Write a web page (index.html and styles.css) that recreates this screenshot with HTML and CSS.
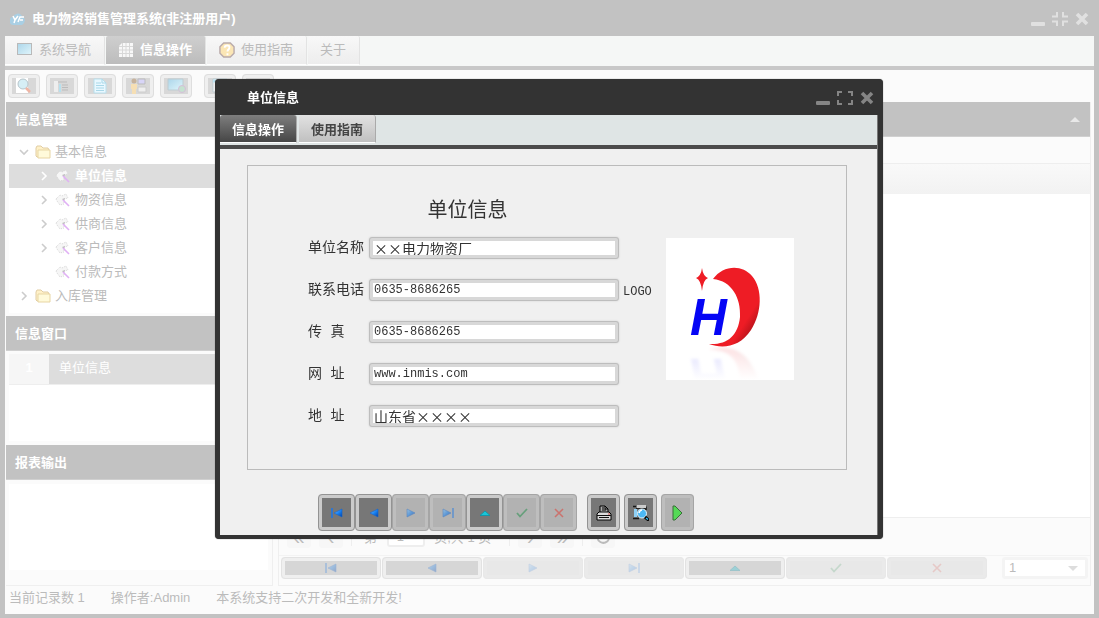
FILE: index.html
```html
<!DOCTYPE html>
<html lang="zh-CN">
<head>
<meta charset="utf-8">
<title>电力物资销售管理系统</title>
<link rel="stylesheet" href="styles.css">
</head>
<body>
<svg class="defs" aria-hidden="true">
  <defs>
    <linearGradient id="blue" x2="1" y2="1"><stop stop-color="#8fd0ff"/><stop offset=".5" stop-color="#1b86f5"/><stop offset="1" stop-color="#0040a8"/></linearGradient>
    <linearGradient id="red" x2="1" y2="1"><stop offset=".7" stop-color="#ee1c25"/><stop offset="1" stop-color="#70080c"/></linearGradient>
    <linearGradient id="sky" x2="1" y2="1"><stop stop-color="#acd6ea"/><stop offset="1" stop-color="#e0f5fb"/></linearGradient>
    <symbol id="first" viewBox="0 0 12 10"><path d="M1 0v10" stroke="#1976e8" stroke-width="1.5"/><path d="M11 1v8L3 5z" fill="url(#blue)" stroke="#1263cf" stroke-width=".6"/></symbol>
    <symbol id="prev" viewBox="0 0 12 10"><path d="M10 1v8L2 5z" fill="url(#blue)" stroke="#1263cf" stroke-width=".6"/></symbol>
    <symbol id="next" viewBox="0 0 12 10"><path d="M2 1v8l8-4z" fill="url(#blue)" stroke="#1263cf" stroke-width=".6"/></symbol>
    <symbol id="last" viewBox="0 0 12 10"><path d="M11 0v10" stroke="#1976e8" stroke-width="1.5"/><path d="M1 1v8l8-4z" fill="url(#blue)" stroke="#1263cf" stroke-width=".6"/></symbol>
    <symbol id="up" viewBox="0 0 12 10"><path d="M1 7.500h10L6 3z" fill="#19c5d8" stroke="#0795a9" stroke-width=".8"/></symbol>
    <symbol id="check" viewBox="0 0 12 10"><path d="M1 5l3 3.500L11 1" fill="none" stroke="#2b9150" stroke-width="1.8"/></symbol>
    <symbol id="cross" viewBox="0 0 12 10"><path d="M2 1l8 8M10 1L2 9" fill="none" stroke="#df4037" stroke-width="1.6"/></symbol>
    <symbol id="chev" viewBox="0 0 8 10"><path d="M2 1l4 4-4 4" fill="none" stroke="currentColor" stroke-width="1.6"/></symbol>
    <symbol id="folder" viewBox="0 0 16 14"><path d="M1 11V3l1-2h4l2 2h5l1 2v7H2z" fill="#fff1c8" stroke="#e1cda3"/><path d="M3 5h12v8H3z" fill="#fffada" stroke="#e7d5a3"/></symbol>
    <symbol id="wand" viewBox="0 0 16 14"><path d="M1 6l4-4 2 1 4-2 2 4-4 1v5L5 12 2 8z" fill="#f6f6f6" stroke="#d8d8d8" stroke-dasharray="1 1"/><path d="M7 6l3-1-1 3z" fill="#bbb"/><path d="M8 7l6 6" stroke="#e0b0f5" stroke-width="1.6"/></symbol>
    <symbol id="min" viewBox="0 0 14 14"><rect x="0" y="10" width="14" height="4" rx="1" fill="currentColor"/></symbol>
    <symbol id="close" viewBox="0 0 14 14"><path d="M2 2l10 10M12 2L2 12" stroke="currentColor" stroke-width="3.6"/></symbol>
  </defs>
</svg>
<main class="app">
  <header class="titlebar">
    <svg width="16" height="14" viewBox="0 0 16 14"><path d="M4 13a4 4 0 0 1-1-8 5 5 0 0 1 9-1 5 5 0 0 1 0 9z" fill="#a9cfe4"/><path d="M3 4l2 4 3-4M5 8l-1 3M8 10l2-5h4M10 8h3" fill="none" stroke="#fff" stroke-width="1.5"/></svg>
    <h1>电力物资销售管理系统(非注册用户)</h1>
    <div class="winctl">
      <button aria-label="最小化"><svg width="14" height="14"><use href="#min"/></svg></button>
      <button aria-label="还原"><svg width="16" height="14" viewBox="0 0 16 14"><path d="M0 4.500h5V0M11 0v4.500h5M0 9.500h5V14M11 14V9.500h5" fill="none" stroke="currentColor" stroke-width="2"/></svg></button>
      <button aria-label="关闭"><svg width="14" height="14"><use href="#close"/></svg></button>
    </div>
  </header>
  <nav class="tabs">
    <button class="tab"><svg width="16" height="14" viewBox="0 0 16 14"><rect x=".5" y=".5" width="14" height="11" fill="url(#sky)" stroke="#b9b9b9"/></svg>系统导航</button>
    <button class="tab on"><svg width="16" height="14" viewBox="0 0 16 14"><path d="M4 0h11v14H1V3z" fill="#f8f8f8"/><path d="M1 3.500h14M1 7h14M1 10.500h14M4.500 0v14M8 0v14M11.500 0v14" stroke="#d8d8d8"/></svg>信息操作</button>
    <button class="tab"><svg width="16" height="16" viewBox="0 0 17 17"><path d="M5 1h7l4 4v7l-4 4H5l-4-4V5z" fill="#fbe6b5" stroke="#b9aaaa" stroke-width="1.5"/><path d="M6 6c0-3 6-3 5 0 0 2-2 2-2 4M9 12v2" fill="none" stroke="#fff" stroke-width="2"/></svg>使用指南</button>
    <button class="tab">关于</button>
  </nav>
  <div class="toolbar">
    <button class="tool" aria-label="查询"><svg viewBox="0 0 24 16"><path d="M4 0h12v15H4z" fill="#fff"/><circle cx="11" cy="6" r="5" fill="#d6eef5" stroke="#b6c4ca"/><path d="M14 10l4 4" stroke="#efb5a4" stroke-width="2.5"/></svg></button>
    <button class="tool" aria-label="列表"><svg viewBox="0 0 24 16"><path d="M4 3h4v11H4z" fill="#eee"/><path d="M8 4h9M12 7h6M12 9.500h6M12 12h6" stroke="#bbb"/><path d="M10 6v8" stroke="#b6e0ee" stroke-width="2"/></svg></button>
    <button class="tool" aria-label="文档"><svg viewBox="0 0 24 16"><path d="M6 1h8l4 4v10H6z" fill="#e9f8ff" stroke="#b9dfec"/><path d="M8 5h5M8 7.500h8M8 10h8M8 12.500h8M14 1v4h4" fill="none" stroke="#a9d8e9"/></svg></button>
    <button class="tool" aria-label="用户"><svg viewBox="0 0 24 16"><path d="M5 6h6v5h-1v5H6v-5H5z" fill="#f6dfb4"/><circle cx="8" cy="3" r="2.5" fill="#c7b39d"/><path d="M12 1h7v5h-7z" fill="#d8d5f7" stroke="#bbb"/><path d="M12 9h8v5h-8z" fill="#efefef" stroke="#ccc"/></svg></button>
    <button class="tool" aria-label="桌面"><svg viewBox="0 0 24 16"><path d="M4 1h15v11H4z" fill="url(#sky)" stroke="#bdccd2"/><circle cx="18" cy="11" r="3.5" fill="#c5e2d0" stroke="#d6bed9"/></svg></button>
    <button class="tool split" aria-label="窗口"><svg viewBox="0 0 24 16"><path d="M5 1h14v13H5z" fill="#fff" stroke="#bdccd2"/><path d="M5 3h14" stroke="#bde5f4" stroke-width="3"/></svg></button>
    <button class="tool" aria-label="设置"><svg viewBox="0 0 24 16"><path d="M4 2h5v4H4zM13 2h6v4h-6z" fill="#ccc"/></svg></button>
  </div>
  <div class="body">
    <aside class="side">
      <h2 class="head">信息管理</h2>
      <ul class="tree">
        <li><svg class="turn" width="8" height="10"><use href="#chev"/></svg><svg width="16" height="14"><use href="#folder"/></svg>基本信息</li>
        <li class="sub on"><svg width="8" height="10"><use href="#chev"/></svg><svg width="16" height="14"><use href="#wand"/></svg>单位信息</li>
        <li class="sub"><svg width="8" height="10"><use href="#chev"/></svg><svg width="16" height="14"><use href="#wand"/></svg>物资信息</li>
        <li class="sub"><svg width="8" height="10"><use href="#chev"/></svg><svg width="16" height="14"><use href="#wand"/></svg>供商信息</li>
        <li class="sub"><svg width="8" height="10"><use href="#chev"/></svg><svg width="16" height="14"><use href="#wand"/></svg>客户信息</li>
        <li class="sub leaf"><svg width="16" height="14"><use href="#wand"/></svg>付款方式</li>
        <li><svg width="8" height="10"><use href="#chev"/></svg><svg width="16" height="14"><use href="#folder"/></svg>入库管理</li>
      </ul>
      <h2 class="head">信息窗口</h2>
      <div class="list"><div class="row"><b>1</b><span>单位信息</span></div></div>
      <h2 class="head">报表输出</h2>
      <div class="blank"></div>
    </aside>
    <section class="content">
      <div class="head bar"><svg width="10" height="5" viewBox="0 0 10 5"><path d="M0 5h10L5 0z" fill="#e8e8e8"/></svg></div>
      <div class="strip"></div>
      <div class="cols"></div>
      <div class="grid"></div>
      <div class="pager">
        <button>«</button><button>‹</button><i></i>
        <label class="page">第 <input value="1" aria-label="页"> 页,共 1 页</label><i></i>
        <button>›</button><button>»</button><i></i>
        <button aria-label="刷新"><svg width="16" height="16" viewBox="0 0 16 16"><path d="M13 4a6 6 0 1 0 1 6M14 1v5H9" fill="none" stroke="#bbb" stroke-width="2"/></svg></button>
      </div>
      <div class="recnav">
        <button aria-label="首条"><svg width="12" height="10"><use href="#first"/></svg></button>
        <button aria-label="上一条"><svg width="12" height="10"><use href="#prev"/></svg></button>
        <button disabled aria-label="下一条"><svg width="12" height="10"><use href="#next"/></svg></button>
        <button disabled aria-label="末条"><svg width="12" height="10"><use href="#last"/></svg></button>
        <button aria-label="编辑"><svg width="12" height="10"><use href="#up"/></svg></button>
        <button disabled aria-label="保存"><svg width="12" height="10"><use href="#check"/></svg></button>
        <button disabled aria-label="取消"><svg width="12" height="10"><use href="#cross"/></svg></button>
        <div class="combo"><select aria-label="记录"><option>1</option></select><svg width="10" height="5" viewBox="0 0 10 5"><path d="M0 0h10L5 5z" fill="#ddd"/></svg></div>
      </div>
    </section>
  </div>
  <footer class="status"><span>当前记录数 1</span><span>操作者:Admin</span><span>本系统支持二次开发和全新开发!</span></footer>
</main>

<div class="overlay">
  <section class="dialog" role="dialog" aria-labelledby="dlg">
    <header class="dtitle">
      <h2 id="dlg">单位信息</h2>
      <div class="winctl">
        <button aria-label="最小化"><svg width="14" height="14"><use href="#min"/></svg></button>
        <button aria-label="最大化"><svg width="16" height="14" viewBox="0 0 16 14"><path d="M1 5V1h4M11 1h4v4M1 9v4h4M11 13h4V9" fill="none" stroke="currentColor" stroke-width="2"/></svg></button>
        <button aria-label="关闭"><svg width="14" height="14"><use href="#close"/></svg></button>
      </div>
    </header>
    <div class="dinner">
      <nav class="dtabs"><button class="on">信息操作</button><button>使用指南</button></nav>
      <form class="panel">
        <div class="fields">
          <h3>单位信息</h3>
          <div class="field"><label for="name">单位名称</label><input id="name" class="cn" value="××电力物资厂"></div>
          <div class="field"><label for="tel">联系电话</label><input id="tel" value="0635-8686265"></div>
          <div class="field"><label for="fax">传 真</label><input id="fax" value="0635-8686265"></div>
          <div class="field"><label for="web">网 址</label><input id="web" value="www.inmis.com"></div>
          <div class="field"><label for="addr">地 址</label><input id="addr" class="cn" value="山东省××××"></div>
        </div>
        <span class="logolabel">LOGO</span>
        <svg class="logo" width="128" height="142" viewBox="0 0 128 142" role="img" aria-label="LOGO">
          <defs><linearGradient id="fade" x1="0" y1="0" x2="0" y2="1"><stop offset="0" stop-color="#fff" stop-opacity=".86"/><stop offset="1" stop-color="#fff"/></linearGradient>
          <filter id="soft"><feGaussianBlur stdDeviation="1.5"/></filter>
          <g id="mark"><path d="M47 41C57 27 76 26 86 38 97 51 96 75 85 92 74 109 57 111 43 106 61 107 72 98 74 79 75 60 66 43 47 41z" fill="url(#red)"/><path d="M36 30q1 8 6 10-5 2-6 13-1-11-6-13 5-2 6-10z" fill="#ee1c25"/><text x="24" y="97" class="mark">H</text></g></defs>
          <rect width="128" height="142" fill="#fff"/>
          <use href="#mark" transform="matrix(1 0 0 -1 0 218)" filter="url(#soft)"/>
          <path d="M0 106h128v36H0z" fill="url(#fade)"/>
          <use href="#mark"/>
        </svg>
      </form>
      <div class="actions">
        <button class="live" aria-label="首条"><svg width="12" height="10"><use href="#first"/></svg></button>
        <button class="live" aria-label="上一条"><svg width="12" height="10"><use href="#prev"/></svg></button>
        <button disabled aria-label="下一条"><svg width="12" height="10"><use href="#next"/></svg></button>
        <button disabled aria-label="末条"><svg width="12" height="10"><use href="#last"/></svg></button>
        <button class="live" aria-label="编辑"><svg width="12" height="10"><use href="#up"/></svg></button>
        <button disabled aria-label="保存"><svg width="12" height="10"><use href="#check"/></svg></button>
        <button disabled aria-label="取消"><svg width="12" height="10"><use href="#cross"/></svg></button>
        <div class="extra">
          <button class="live" aria-label="打印"><svg width="16" height="16" viewBox="0 0 16 16"><path d="M4 8V1h5l3 3v4" fill="#aaa" stroke="#000"/><path d="M6 3h2M6 5h4M9 1v3h3" stroke="#000" fill="none"/><path d="M1 9l2-2h10l2 2v6H1z" fill="#ddd" stroke="#000"/><path d="M1 10.500h14M3 12.500h10" stroke="#111"/><path d="M12 9h2" stroke="#d44"/></svg></button>
          <button class="live" aria-label="预览"><svg width="16" height="16" viewBox="0 0 16 16"><path d="M0 1.500h3M13 1.500V5M0 13.500h6" fill="none" stroke="#161616" stroke-width="1.5"/><path d="M4 0h9v3H4z" fill="#ccc"/><path d="M3 3.500h10" stroke="#222"/><path d="M1 4h3v8H1z" fill="#8fd0f5"/><circle cx="9" cy="8.500" r="4.500" fill="#4bb8f5" stroke="#e4f7ff"/><path d="M6 8q1-3 3-3" stroke="#fff" stroke-width="1.5" fill="none"/><path d="M12 12l4 3.500" stroke="#000" stroke-width="3"/><path d="M13 13l2 1.500" stroke="#32bdf5" stroke-width="1.5"/></svg></button>
          <button class="exit" aria-label="执行"><svg width="12" height="16" viewBox="0 0 12 16"><path d="M1 1v14h2l7-7-7-7z" fill="#55d957" stroke="#3b6c3b"/></svg></button>
        </div>
      </div>
    </div>
  </section>
</div>
</body>
</html>
```
FILE: styles.css
```css
* { box-sizing: border-box; }
body { margin: 0; height: 100vh; overflow: hidden; font: 13px/18px "Liberation Sans", "Noto Sans CJK SC", sans-serif; color: #bbb; }
button, input, select { font: inherit; color: inherit; margin: 0; }
button { cursor: pointer; padding: 0; border: 0; background: none; }
button svg { display: block; }
h1, h2, h3, ul { margin: 0; padding: 0; font-size: 13px; }
.defs { position: absolute; width: 0; height: 0; }

.app { height: 100vh; display: flex; flex-direction: column; background: #fbfbfb; border: solid #c2c2c2; border-width: 0 5px 4px; }
.titlebar { display: flex; align-items: center; gap: 6px; height: 36px; flex: none; padding: 2px 5px 0; background: #c2c2c2; color: #fff; }
.winctl { margin-left: auto; display: flex; gap: 7px; color: #e0e0e0; }

.tabs { display: flex; gap: 1px; height: 34px; flex: none; background: #f5f7f6; border-bottom: 4px solid #c8c8c8; padding-bottom: 1px; }
.tab { display: flex; align-items: center; gap: 6px; padding: 0 13px 0 12px; background: linear-gradient(#f8f8f8, #ededed); border-right: 1px solid #e3e3e3; border-bottom: 1px solid #fff; border-radius: 2px 2px 0 0; }
.tab.on { background: linear-gradient(#cfcfcf, #bcbcbc); color: #fff; font-weight: bold; }

.toolbar { display: flex; gap: 6px; height: 32px; flex: none; padding: 4px 3px; }
.tool { width: 32px; height: 24px; padding: 0; background: #d8d8d8; border: 4px solid #efefef; outline: 1px solid #dedede; outline-offset: -1px; border-radius: 4px; display: grid; place-items: center; }
.tool.split { margin-left: 6px; }
.tool svg { width: 24px; height: 16px; }

.body { flex: 1; min-height: 0; display: flex; gap: 5px; padding: 0 3px 0 1px; }
.side { flex: none; width: 267px; display: flex; flex-direction: column; border-right: 1px solid #efefef; border-bottom: 1px solid #efefef; }
.head { height: 35px; flex: none; padding: 9px 9px; background: #c2c2c2; color: #fff; border-bottom: 1px solid #d0d0d0; }
.tree { list-style: none; margin: 3px 3px; padding-bottom: 5px; background: #fff; }
.tree li { display: flex; align-items: center; gap: 4px; height: 24px; padding-left: 11px; color: #bbb; }
.tree li svg { color: #ccc; }
.tree li svg + svg { margin-left: 3px; }
.tree .sub { padding-left: 31px; }
.tree .leaf { padding-left: 46px; }
.tree .on { background: #ddd; color: #fff; font-weight: bold; }
.tree .on svg { color: #fff; }
.turn { transform: rotate(90deg); }
.list { height: 87px; flex: none; margin: 3px 3px 4px; background: #fff; }
.row { height: 31px; display: flex; background: #ddd; color: #fff; line-height: 28px; border-bottom: 1px solid #eee; }
.row b { width: 40px; text-align: center; background: #f6f6f6; }
.row span { padding-left: 10px; }
.blank { flex: 1; margin: 4px 4px 15px 3px; background: #fff; }

.content { flex: 1; min-width: 0; display: flex; flex-direction: column; border: solid #efefef; border-width: 0 1px 1px; }
.bar { display: flex; justify-content: flex-end; align-items: center; padding: 0 10px; }
.strip { height: 27px; flex: none; border-bottom: 1px solid #eee; }
.cols { height: 30px; flex: none; background: linear-gradient(#f9f9f9, #f2f2f2); }
.grid { flex: 1; background: #fff; border-bottom: 1px solid #eee; }
.pager { height: 38px; flex: none; display: flex; align-items: center; gap: 8px; padding: 4px 8px; border-bottom: 1px solid #f3f3f3; }
.pager button { width: 24px; height: 22px; background: #f7f7f7; border-radius: 3px; font-size: 20px; display: grid; place-items: center; }
.pager i { width: 1px; height: 18px; background: #eee; }
.page { padding: 0 4px; margin-right: 6px; }
.page input { width: 38px; height: 20px; margin: 0 6px; padding: 0 8px; background: #fff; border: 2px solid #eee; border-radius: 3px; }
.recnav { height: 29px; flex: none; display: flex; gap: 1px; padding: 1px 2px 6px 2px; }
.recnav button { flex: 1; display: grid; place-items: center; background: #d6d6d6; border: 4px solid #efefef; outline: 1px solid #e2e2e2; outline-offset: -1px; border-radius: 4px; }
.recnav button:disabled { background: #e8e8e8; border-color: #eaeaea; outline-color: #e8e8e8; }
.recnav button svg { opacity: .3; }
.recnav button:disabled svg { opacity: .18; }
.combo { width: 86px; margin-left: 14px; display: flex; align-items: center; background: #fff; border: 3px solid #f4f4f4; border-radius: 3px; padding-right: 7px; }
.combo select { flex: 1; min-width: 0; appearance: none; border: 0; background: none; padding: 0 4px; }
.status { height: 28px; flex: none; display: flex; gap: 26px; padding: 3px 4px; }

.overlay { position: fixed; inset: 0; display: flex; justify-content: center; align-items: flex-start; padding: 79px 17px 16px 16px; }
.dialog { width: 668px; background: #333; border-radius: 4px; padding: 0 5px 4px; box-shadow: 0 0 1px #555; }
.dtitle { display: flex; align-items: center; height: 36px; padding: 2px 4px 0 27px; color: #fff; }
.dtitle .winctl { color: #858585; }
.dinner { background: #f0f0f0; border-right: 1px solid #777; }
.dtabs { display: flex; gap: 2px; height: 34px; background: #dfe5e5; border-bottom: 4px solid #4b4b4b; padding-bottom: 2px; }
.dtabs button { padding: 2px 12px 0; font-weight: bold; color: #444; background: linear-gradient(#e2e2e2, #c0c0c0); border-right: 1px solid #aaa; border-bottom: 1px solid #fff; border-radius: 3px 3px 0 0; }
.dtabs .on { color: #fff; background: linear-gradient(#7e7e7e, #464646); }
.panel { display: flex; align-items: flex-start; margin: 16px 30px 0 27px; padding: 31px 52px 42px 60px; border: 1px solid #bbb; color: #333; }
.fields { flex: 1; display: flex; flex-direction: column; gap: 20px; font: 14px/22px "Liberation Mono", "Noto Sans CJK SC", monospace; }
.fields h3 { font: 20px/24px "Noto Sans CJK SC", sans-serif; text-align: center; padding-left: 8px; margin-bottom: -4px; }
.field { display: flex; gap: 5px; }
.field label { width: 56px; white-space: nowrap; }
.field input { flex: 1; min-width: 0; height: 22px; padding: 0 1px; border: 4px solid #d8d8d8; outline: 1px solid #bdbdbd; outline-offset: -1px; border-radius: 3px; background: #fff; box-shadow: 0 0 2px #ccc; font-size: 12px; line-height: 14px; }
.field .cn { font: 14px/14px "Noto Sans CJK SC", sans-serif; }
.logolabel { width: 43px; margin-top: 85px; padding-left: 4px; font: 12px/20px "Liberation Mono", monospace; }
.logo { flex: none; margin: 41px 0 0 4px; }
.mark { font: italic bold 51px "Liberation Sans", sans-serif; fill: #0505f5; }
.actions { display: flex; justify-content: center; padding: 24px 85px 4px 0; }
.actions button { width: 37px; height: 37px; display: grid; place-items: center; background: #b2b2b2; border: 4px solid #bebebe; outline: 1px solid #a5a5a5; outline-offset: -1px; border-radius: 4px; }
.actions .live { background: #777; border-color: #cbcbcb; outline-color: #939393; }
.actions button:disabled svg { opacity: .55; }
.extra { display: flex; gap: 4px; margin-left: 10px; }
.extra button { width: 33px; }
```
